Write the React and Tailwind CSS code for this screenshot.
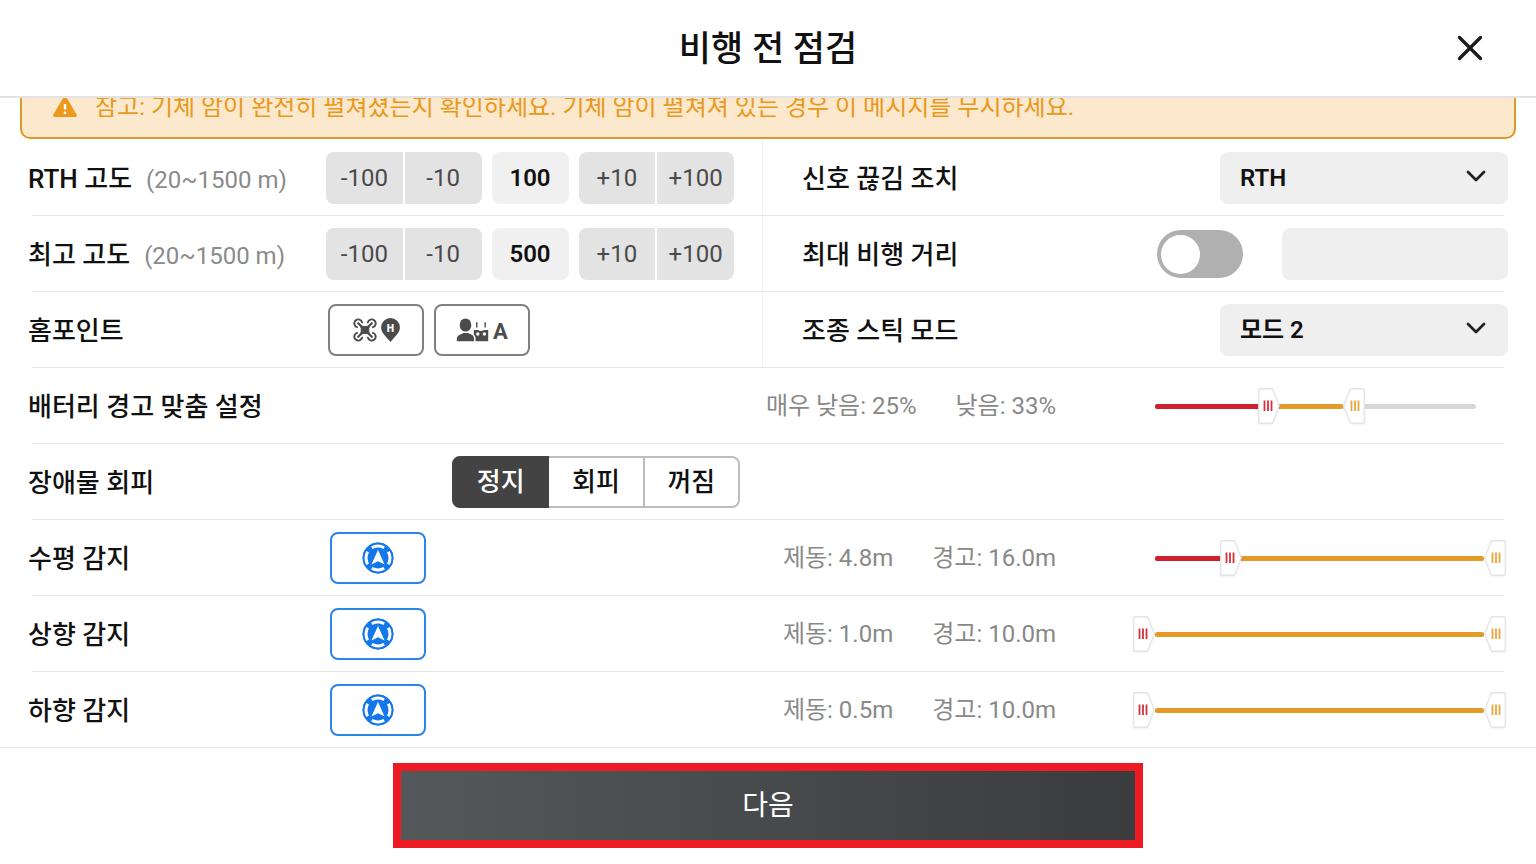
import { useState } from "react";
import { ChevronDown, X } from "lucide-react";

function Row({ label, htmlFor, labelClass, children }) {
  return (
    <div className="flex items-center pt-3 pb-[11px] h-[75px]">
      <label
        htmlFor={htmlFor}
        className={`shrink-0 pt-[2px] font-medium whitespace-nowrap ${labelClass}`}
      >
        {label}
      </label>
      {children}
    </div>
  );
}

function Divider() {
  return <hr className="mx-8 h-px border-0 bg-[#e6e6e6]" />;
}

function SplitRow({ children }) {
  return <div className="grid grid-cols-[734fr_746fr] px-7">{children}</div>;
}

function StepButton({ children, onClick, className }) {
  return (
    <button
      type="button"
      onClick={onClick}
      className={`flex-1 h-[52px] bg-[#e3e3e3] text-[#4a4a4a] ${className}`}
    >
      {children}
    </button>
  );
}

function AltitudeStepper({ id, initial }) {
  const [value, setValue] = useState(initial);
  const step = (n) => setValue(Math.min(1500, Math.max(20, Number(value) + n)));

  return (
    <div className="flex w-[408px] gap-[10px] text-2xl">
      <div className="flex flex-1 gap-[2px]">
        <StepButton onClick={() => step(-100)} className="rounded-l-lg">-100</StepButton>
        <StepButton onClick={() => step(-10)} className="rounded-r-lg">-10</StepButton>
      </div>
      <input
        id={id}
        value={value}
        onChange={(e) => setValue(e.target.value)}
        className="w-[77px] h-[52px] rounded-lg bg-[#f0f0f0] text-center font-semibold text-[#111]"
      />
      <div className="flex flex-1 gap-[2px]">
        <StepButton onClick={() => step(10)} className="rounded-l-lg">+10</StepButton>
        <StepButton onClick={() => step(100)} className="rounded-r-lg">+100</StepButton>
      </div>
    </div>
  );
}

function AltitudeLabel({ children }) {
  return (
    <>
      {children}
      <span className="ml-[14px] text-2xl font-normal text-[#8a8a8a]">(20~1500 m)</span>
    </>
  );
}

function SelectBox({ id, options, initial }) {
  return (
    <div className="relative ml-auto w-[288px]">
      <select
        id={id}
        defaultValue={initial}
        className="w-full h-[52px] appearance-none rounded-lg bg-[#efefef] pl-5 text-2xl font-semibold text-[#111]"
      >
        {options.map((o) => (
          <option key={o}>{o}</option>
        ))}
      </select>
      <ChevronDown
        className="pointer-events-none absolute right-4 top-2 size-8 text-[#222]"
        strokeWidth={2.1}
      />
    </div>
  );
}

function Thumb({ color, flip }) {
  return (
    <svg
      width="22"
      height="36"
      viewBox="0 0 22 36"
      className={flip ? "-scale-x-100 drop-shadow-xs" : "drop-shadow-xs"}
    >
      <path
        d="M2 .75H13.5Q14.4.75 14.8 1.6L21.3 18L14.8 34.4Q14.4 35.25 13.5 35.25H2Q.75 35.25 .75 34V2Q.75.75 2 .75Z"
        fill="#fff"
        stroke="#e4e4e4"
        strokeWidth="1.3"
      />
      <path d="M6.5 12.5V23M10 12.5V23M13.5 12.5V23" stroke={color} strokeWidth="1.8" />
    </svg>
  );
}

const rangeClass =
  "pointer-events-none absolute inset-0 w-full h-9 appearance-none opacity-0 [&::-webkit-slider-thumb]:pointer-events-auto";

function RangeRow({ label, children, labelClass, lowName, highName, unit, digits, min, max, step, low, high, trackClass }) {
  const [lo, setLo] = useState(low);
  const [hi, setHi] = useState(high);
  const pct = (v) => ((v - min) / (max - min)) * 100;

  return (
    <div className="px-7">
      <Row label={label} labelClass={labelClass}>
        {children}
        <div className="ml-auto flex gap-[39px] text-2xl whitespace-nowrap text-[#888]">
          <span>{lowName}: {lo.toFixed(digits)}{unit}</span>
          <span>{highName}: {hi.toFixed(digits)}{unit}</span>
        </div>
        <div className="relative ml-[99px] mr-6 flex h-9 w-[329px] items-center">
          <div className={`h-[5px] flex-1 rounded-full bg-[#d8d8d8] ${trackClass}`} />
          <div
            className="absolute left-0 h-[5px] rounded-full bg-[#e49a26]"
            style={{ width: `${pct(hi)}%` }}
          />
          <div
            className="absolute left-0 h-[5px] rounded-full bg-[#d0202e]"
            style={{ width: `${pct(lo)}%` }}
          />
          <div className="absolute -translate-x-full" style={{ left: `${pct(lo)}%` }}>
            <Thumb color="#d5303c" />
          </div>
          <div className="absolute" style={{ left: `${pct(hi)}%` }}>
            <Thumb color="#e8a53c" flip />
          </div>
          <input
            type="range"
            aria-label={`${label} ${lowName}`}
            min={min}
            max={max}
            step={step}
            value={lo}
            onChange={(e) => setLo(Math.min(Number(e.target.value), hi))}
            className={rangeClass}
          />
          <input
            type="range"
            aria-label={`${label} ${highName}`}
            min={min}
            max={max}
            step={step}
            value={hi}
            onChange={(e) => setHi(Math.max(Number(e.target.value), lo))}
            className={rangeClass}
          />
        </div>
      </Row>
    </div>
  );
}

function WarningIcon() {
  return (
    <svg width="24" height="21" viewBox="0 0 24 21">
      <path d="M10.6 1.2Q12-.9 13.4 1.2L23.6 18.6Q24.4 20.8 22.2 21H1.8Q-.4 20.8.4 18.6Z" fill="#ec9a1c" />
      <path d="M12 8V13.6M12 15.6V17.9" stroke="#fff" strokeWidth="2.4" />
    </svg>
  );
}

function DroneIcon() {
  return (
    <svg width="24" height="24" viewBox="0 0 24 24" fill="none" stroke="#4b4b4b">
      <path d="M5.2 5.2L9 9M18.8 5.2L15 9M5.2 18.8L9 15M18.8 18.8L15 15" strokeWidth="2.2" strokeLinecap="round" />
      <path d="M7.6 8L9.5 8.4H14.5L16.4 8L15.8 10.5V13.5L16.4 16L14.5 15.6H9.5L7.6 16L8.2 13.5V10.5Z" fill="#4b4b4b" />
      <path
        d="M4 9.2A4 4 0 1 1 9.2 4.4M14.8 4.4A4 4 0 1 1 20 9.2M20 14.8A4 4 0 1 1 14.8 19.6M9.2 19.6A4 4 0 1 1 4 14.8"
        strokeWidth="1.9"
        strokeLinecap="round"
      />
    </svg>
  );
}

function HomePinIcon() {
  return (
    <svg width="19" height="24" viewBox="0 0 18 23">
      <path d="M9 0A9 9 0 0 1 18 9C18 14.5 12.5 18 9 23C5.5 18 0 14.5 0 9A9 9 0 0 1 9 0Z" fill="#4b4b4b" />
      <text x="9" y="13" textAnchor="middle" fill="#fff" fontSize="10" fontWeight="900">H</text>
    </svg>
  );
}

function PilotIcon() {
  return (
    <svg width="33" height="24" viewBox="0 0 33 24" fill="#4b4b4b">
      <ellipse cx="9.5" cy="7" rx="5.8" ry="6.6" />
      <path d="M.8 23.2V21C1 17 5 16.400 7.500 15H12C14.500 16 17.600 17 18 20V23.200Z" />
      <path d="M17.800 12H22Q25 14 28 12H32.200V23.200H19.500V19.500Q19.200 17.500 17.800 16.500Z" />
      <path d="M20.800 4.200V9.500M29.200 4.200V9.500" stroke="#4b4b4b" strokeWidth="1.400" />
      <circle cx="21.800" cy="16" r="1.700" fill="#fff" />
      <circle cx="28.400" cy="16" r="1.700" fill="#fff" />
    </svg>
  );
}

function RadarIcon() {
  return (
    <svg width="32" height="32" viewBox="0 0 32 32" fill="none" stroke="#1478ea">
      <circle cx="16" cy="16" r="15.2" fill="#1478ea" strokeWidth="1" />
      <circle
        cx="16"
        cy="16"
        r="12"
        stroke="#fff"
        strokeWidth="3"
        pathLength="360"
        strokeDasharray="62 28"
        strokeDashoffset="31"
      />
      <path d="M16 8L22.6 22.4L16 19.2L9.4 22.4Z" fill="#fff" stroke="none" />
    </svg>
  );
}

function SenseButton({ name }) {
  return (
    <button
      type="button"
      aria-label={name}
      className="flex h-[52px] w-24 items-center justify-center rounded-lg border-2 border-[#2b84e6]"
    >
      <RadarIcon />
    </button>
  );
}

function AvoidanceTabs() {
  const [active, setActive] = useState("정지");
  return (
    <div className="flex h-[52px] w-72">
      {["정지", "회피", "꺼짐"].map((name) => (
        <button
          key={name}
          type="button"
          aria-pressed={active === name}
          onClick={() => setActive(name)}
          className={`flex-1 border-y-2 border-r-2 font-medium first:rounded-l-lg first:border-l-2 last:rounded-r-lg ${
            active === name
              ? "border-[#434343] bg-[#434343] text-white"
              : "border-[#bdbdbd] bg-white text-[#111]"
          }`}
        >
          {name}
        </button>
      ))}
    </div>
  );
}

const sensors = [
  { label: "수평 감지", low: 4.8, high: 16, min: 0.8, max: 16 },
  { label: "상향 감지", low: 1, high: 10, min: 1, max: 10 },
  { label: "하향 감지", low: 0.5, high: 10, min: 0.5, max: 10 },
];

export default function App() {
  return (
    <div className="flex h-screen flex-col bg-white font-[Roboto,'Noto_Sans_CJK_KR',sans-serif] text-[26px] leading-9 text-[#111]">
      <header className="grid shrink-0 grid-cols-[1fr_auto_1fr] items-center border-b-2 border-[#e2e2e2] px-[45px]">
        <h1 className="col-start-2 pt-[26px] pb-[22px] text-[35px] leading-[48px] font-medium">비행 전 점검</h1>
        <button type="button" aria-label="닫기" className="justify-self-end">
          <X className="size-[42px] text-[#1c1c1c]" strokeWidth={1.9} />
        </button>
      </header>

      <main className="flex min-h-0 flex-1 flex-col-reverse overflow-y-auto [scrollbar-width:none]">
        <div>
          <div className="mx-5 mb-px flex h-[66px] items-center gap-[18px] rounded-[10px] border-2 border-[#dd992b] bg-[#fbe8cd] pl-[31px] text-2xl text-[#e8991c]">
            <WarningIcon />
            <p className="pt-[2px]">
              참고: 기체 암이 완전히 펼쳐졌는지 확인하세요. 기체 암이 펼쳐져 있는 경우 이 메시지를 무시하세요.
            </p>
          </div>

          <SplitRow>
            <Row label={<AltitudeLabel>RTH 고도</AltitudeLabel>} htmlFor="rth" labelClass="w-[298px]">
              <AltitudeStepper id="rth" initial={100} />
            </Row>
            <div className="border-l border-[#f0f0f0] pl-[39px]">
              <Row label="신호 끊김 조치" htmlFor="signal">
                <SelectBox id="signal" options={["RTH", "호버링", "착륙"]} initial="RTH" />
              </Row>
            </div>
          </SplitRow>
          <Divider />

          <SplitRow>
            <Row label={<AltitudeLabel>최고 고도</AltitudeLabel>} htmlFor="max-alt" labelClass="w-[298px]">
              <AltitudeStepper id="max-alt" initial={500} />
            </Row>
            <div className="border-l border-[#f0f0f0] pl-[39px]">
              <Row label="최대 비행 거리" htmlFor="limit">
                <input
                  id="limit"
                  type="checkbox"
                  role="switch"
                  className="ml-auto mr-[39px] flex h-12 w-[86px] appearance-none items-center rounded-full bg-[#b0b0b0] px-1 before:size-[39px] before:rounded-full before:bg-white checked:justify-end checked:bg-[#1478ea]"
                />
                <input
                  type="text"
                  aria-label="최대 비행 거리 (m)"
                  className="h-[52px] w-[226px] rounded-lg bg-[#efefef] px-5 text-2xl"
                />
              </Row>
            </div>
          </SplitRow>
          <Divider />

          <SplitRow>
            <Row label="홈포인트" labelClass="w-[300px]">
              <div className="flex gap-[10px]">
                <button
                  type="button"
                  aria-label="기체 위치"
                  className="flex h-[52px] w-24 items-center justify-center gap-1 rounded-lg border-2 border-[#808080]"
                >
                  <DroneIcon />
                  <HomePinIcon />
                </button>
                <button
                  type="button"
                  className="flex h-[52px] w-24 items-center justify-center gap-1 rounded-lg border-2 border-[#808080] text-[22px] font-bold text-[#4b4b4b]"
                >
                  <PilotIcon />
                  <span className="pt-1">A</span>
                </button>
              </div>
            </Row>
            <div className="border-l border-[#f0f0f0] pl-[39px]">
              <Row label="조종 스틱 모드" htmlFor="stick">
                <SelectBox id="stick" options={["모드 1", "모드 2", "모드 3"]} initial="모드 2" />
              </Row>
            </div>
          </SplitRow>
          <Divider />

          <RangeRow
            label="배터리 경고 맞춤 설정"
            lowName="매우 낮음"
            highName="낮음"
            unit="%"
            digits={0}
            min={9}
            max={51}
            step={1}
            low={25}
            high={33}
            trackClass="mr-2"
          />
          <Divider />

          <div className="px-7">
            <Row label="장애물 회피" labelClass="w-[424px]">
              <AvoidanceTabs />
            </Row>
          </div>

          {sensors.map((s) => (
            <div key={s.label}>
              <Divider />
              <RangeRow
                {...s}
                labelClass="w-[302px]"
                lowName="제동"
                highName="경고"
                unit="m"
                digits={1}
                step={0.1}
              >
                <SenseButton name={s.label} />
              </RangeRow>
            </div>
          ))}
        </div>
      </main>

      <footer className="flex shrink-0 justify-center border-t border-[#e6e6e6] pt-[15px] pb-4">
        <button
          type="button"
          className="h-[85px] w-full max-w-[750px] border-8 border-[#ed1c24] bg-linear-to-r from-[#55585b] to-[#3a3c3e] text-[28px] text-white"
        >
          다음
        </button>
      </footer>
    </div>
  );
}
